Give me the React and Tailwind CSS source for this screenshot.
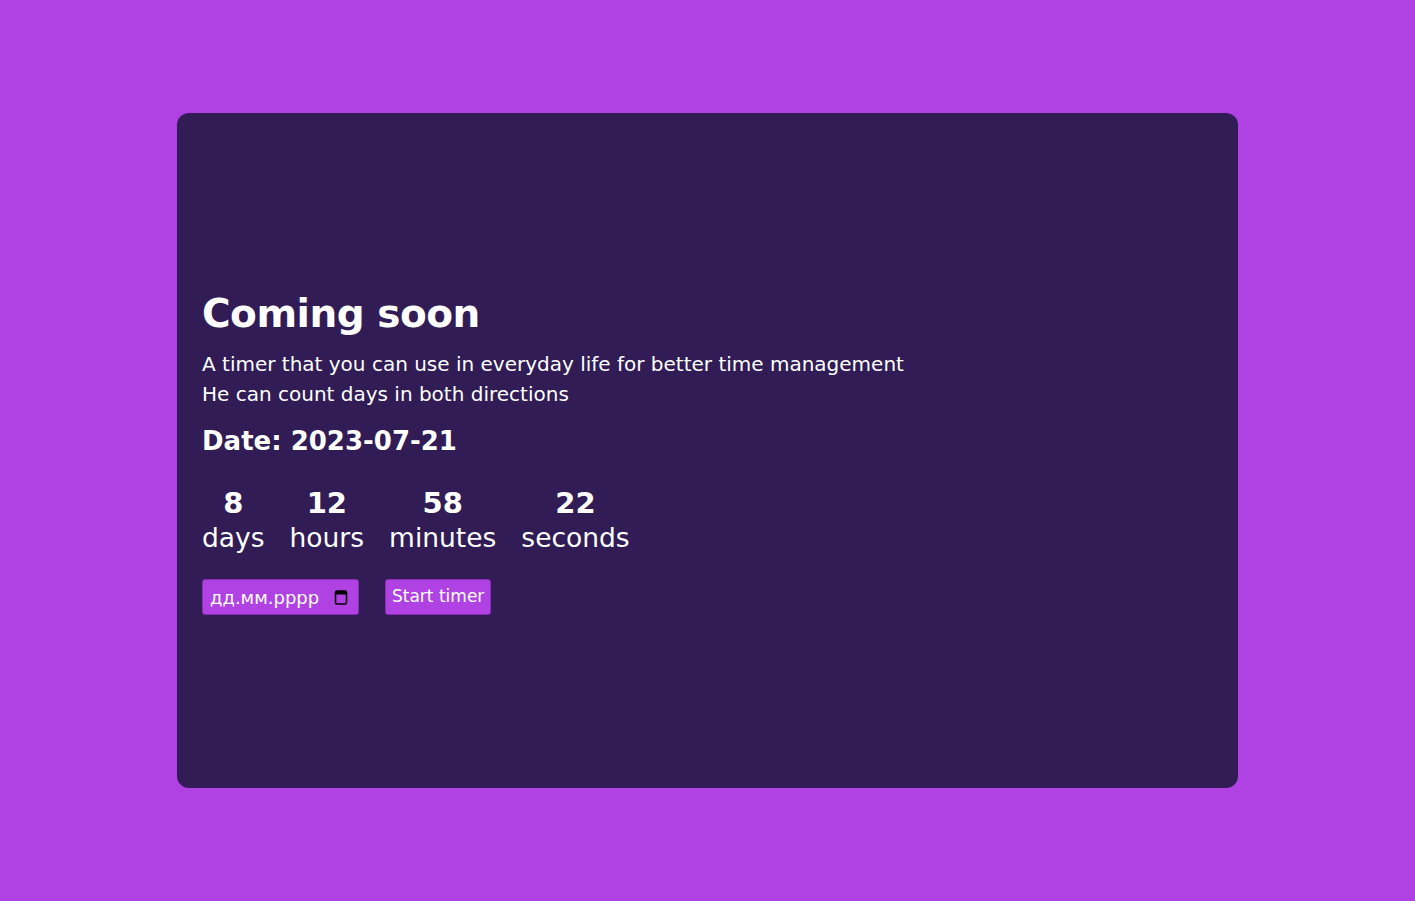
import { useState } from "react";

const units = [
  { value: 8, label: "days" },
  { value: 12, label: "hours" },
  { value: 58, label: "minutes" },
  { value: 22, label: "seconds" },
];

function CalendarIcon() {
  return (
    <svg viewBox="0 0 16 16" className="h-[16px] w-[16px]" aria-hidden>
      <rect x="2.5" y="2" width="11" height="13" rx="1.5" fill="none" stroke="#000" strokeWidth="1.6" />
      <rect x="2.5" y="2" width="11" height="3.5" fill="#000" />
    </svg>
  );
}

export default function App() {
  const [date] = useState("2023-07-21");

  return (
    <div className="flex min-h-[901px] items-center justify-center bg-[#b042e3] font-['DejaVu_Sans',sans-serif] text-white">
      <div className="flex h-[675px] w-[1061px] flex-col justify-center rounded-xl bg-[#311c55] px-[25px]">
        <h1 className="mt-[4px] text-[39px] font-bold leading-[48px] tracking-[-0.5px]">Coming soon</h1>
        <p className="mt-[11px] text-[20px] leading-[30px]">
          A timer that you can use in everyday life for better time management
          <br />
          He can count days in both directions
        </p>
        <h2 className="mt-[14px] text-[26px] font-bold leading-[36px]">Date: {date}</h2>

        <div className="mt-[27px] flex gap-[25px]">
          {units.map((u) => (
            <div key={u.label} className="flex flex-col items-center">
              <span className="text-[29px] font-bold leading-[34px]">{u.value}</span>
              <span className="text-[26.5px] leading-[35px]">{u.label}</span>
            </div>
          ))}
        </div>

        <div className="mt-[24px] flex gap-[26px]">
          <div className="flex h-[36px] w-[157px] items-center justify-between rounded-[3px] border border-[#8a2cb8] bg-[#b042e3] pl-[7px] pr-[9px] text-[18px]">
            <span>дд.мм.рррр</span>
            <CalendarIcon />
          </div>
          <button
            type="button"
            className="h-[36px] rounded-[3px] border border-[#8a2cb8] bg-[#b042e3] px-[6px] text-[17px] text-white"
          >
            Start timer
          </button>
        </div>
      </div>
    </div>
  );
}
